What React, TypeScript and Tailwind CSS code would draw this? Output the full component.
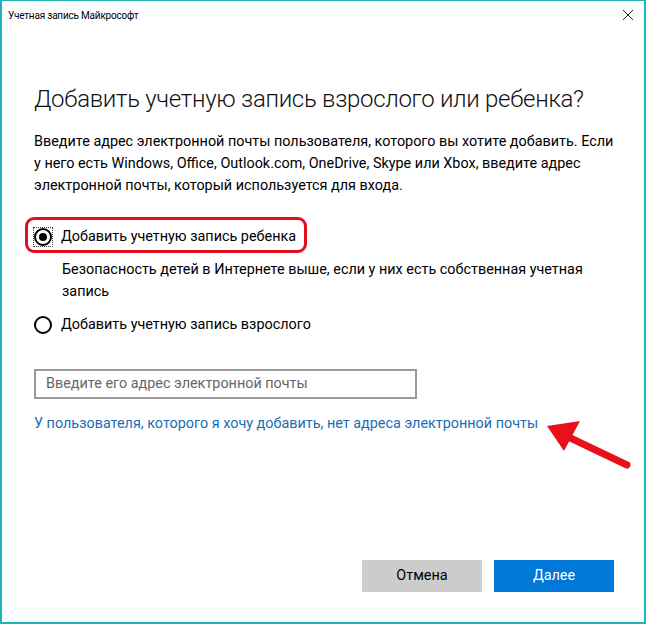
import React from 'react';

const font = { fontFamily: 'Roboto, "Noto Sans", Arial, sans-serif' };

const Radio: React.FC<{ checked?: boolean; focused?: boolean }> = ({ checked, focused }) => (
    <div className={`flex items-center justify-center w-[20px] h-[20px] ${focused ? 'border border-dotted border-[#444]' : 'border border-transparent'}`}>
        <div className="flex items-center justify-center w-[18px] h-[18px] rounded-full border-2 border-black">
            {checked && <div className="w-[8px] h-[8px] rounded-full bg-black" />}
        </div>
    </div>
);

const App: React.FC = () => {
    return (
        <div className="w-[648px] h-[625px] bg-white" style={font}>
            <div className="relative w-[646px] h-[624px] border-x-2 border-b-2 border-t border-[#1fb2b8] bg-white flex flex-col">
                {/* title bar */}
                <div className="flex items-center justify-between h-[28px] pl-[6px] pr-[10px]">
                    <span className="text-[10px] tracking-[-0.2px] text-black">Учетная запись Майкрософт</span>
                    <svg width="12" height="12" viewBox="0 0 12 12">
                        <path d="M1 1 L11 11 M11 1 L1 11" stroke="#222" strokeWidth="1" />
                    </svg>
                </div>

                <div className="flex flex-col pl-[32px] pr-[20px] text-[14.4px]">
                    <h1 className="mt-[53px] text-[24px] tracking-[-0.3px] font-light leading-[34px] text-[#111] whitespace-nowrap">
                        Добавить учетную запись взрослого или ребенка?
                    </h1>

                    <p className="mt-[15px] leading-[22px] text-black whitespace-nowrap">
                        Введите адрес электронной почты пользователя, которого вы хотите добавить. Если
                        <br />у него есть Windows, Office, Outlook.com, OneDrive, Skype или Xbox, введите адрес
                        <br />электронной почты, который используется для входа.
                    </p>

                    <div className="mt-[28px] flex items-center gap-[8px] h-[24px] -ml-[1px]">
                        <Radio checked focused />
                        <span className="text-black">Добавить учетную запись ребенка</span>
                    </div>

                    <p className="mt-[10px] ml-[28px] leading-[22px] text-black whitespace-nowrap">
                        Безопасность детей в Интернете выше, если у них есть собственная учетная
                        <br />запись
                    </p>

                    <div className="mt-[10px] flex items-center gap-[8px] h-[24px] -ml-[1px]">
                        <Radio />
                        <span className="text-black">Добавить учетную запись взрослого</span>
                    </div>

                    <div className="mt-[32px] w-[383px] h-[30px] border-2 border-[#999] flex items-center px-[10px]">
                        <span className="text-[#666]">Введите его адрес электронной почты</span>
                    </div>

                    <a className="mt-[14px] leading-[22px] text-[#1a6db5] self-start">
                        У пользователя, которого я хочу добавить, нет адреса электронной почты
                    </a>
                </div>

                <div className="mt-auto mb-[30px] flex justify-end gap-[12px] pr-[30px]">
                    <button className="w-[120px] h-[32px] bg-[#cccccc] text-[14.4px] text-black">Отмена</button>
                    <button className="w-[120px] h-[32px] bg-[#0078d7] text-[14.4px] text-white">Далее</button>
                </div>

                {/* annotation: red frame */}
                <div className="absolute left-[23px] top-[216px] w-[282px] h-[36px] border-[3px] border-[#e0101e] rounded-[9px] pointer-events-none" />

                {/* annotation: red arrow */}
                <svg className="absolute left-[538px] top-[414px] pointer-events-none" width="95" height="58" viewBox="540 415 95 58">
                    <line x1="627" y1="465" x2="562" y2="434" stroke="#e8101a" strokeWidth="7" strokeLinecap="round" />
                    <polygon points="547,426 580,421 564,451" fill="#e8101a" />
                </svg>
            </div>
        </div>
    );
};

export default App;
